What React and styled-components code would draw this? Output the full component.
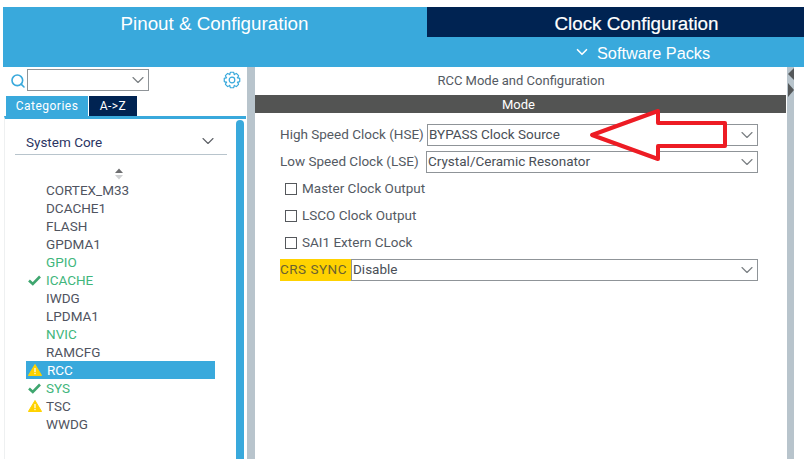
import React from "react";
import styled, { createGlobalStyle } from "styled-components";
import { ChevronDown, Search } from "lucide-react";

const BLUE = "#39a9dc";
const NAVY = "#002352";
const GREY = "#b8c4cc";

const GlobalStyle = createGlobalStyle`
  html, body {
    margin: 0;
    padding: 0;
    background: #fff;
  }
  * {
    box-sizing: border-box;
  }
`;

const peripherals = [
  { name: "CORTEX_M33" },
  { name: "DCACHE1" },
  { name: "FLASH" },
  { name: "GPDMA1" },
  { name: "GPIO", state: "ok" },
  { name: "ICACHE", state: "ok", icon: "check" },
  { name: "IWDG" },
  { name: "LPDMA1" },
  { name: "NVIC", state: "ok" },
  { name: "RAMCFG" },
  { name: "RCC", active: true, icon: "warn" },
  { name: "SYS", state: "ok", icon: "check" },
  { name: "TSC", icon: "warn" },
  { name: "WWDG" },
];

// cog outline, worked out once from the tooth count
const cogPath = (() => {
  const points = [];
  for (let i = 0; i < 8; i++) {
    const a = (i * Math.PI) / 4;
    [[-0.42, 5.9], [-0.2, 7.9], [0.2, 7.9], [0.42, 5.9]].forEach(([d, r]) => {
      points.push(`${(9 + r * Math.cos(a + d)).toFixed(2)} ${(9 + r * Math.sin(a + d)).toFixed(2)}`);
    });
  }
  return `M${points.join(" L")} Z`;
})();

function CheckIcon() {
  return (
    <svg width="13" height="11" viewBox="0 0 13 11">
      <path d="M1 5.5 L4.8 9 L12 1.5" fill="none" stroke="#3fa66f" strokeWidth="2.6" />
    </svg>
  );
}

function WarnIcon() {
  return (
    <svg width="14" height="12" viewBox="0 0 14 12">
      <path d="M7 0.5 L13.6 11.5 L0.4 11.5 Z" fill="#ffd200" stroke="#ffd200" strokeLinejoin="round" />
      <rect x="6.4" y="4" width="1.2" height="4.2" fill="#fff" />
      <rect x="6.4" y="9" width="1.2" height="1.2" fill="#fff" />
    </svg>
  );
}

function GearIcon() {
  return (
    <svg width="18" height="18" viewBox="0 0 18 18">
      <path d={cogPath} fill="none" stroke={BLUE} strokeWidth="1.2" strokeLinejoin="round" />
      <circle cx="9" cy="9" r="2.8" fill="none" stroke={BLUE} strokeWidth="1.2" />
    </svg>
  );
}

function ScrollArrows() {
  return (
    <svg width="10" height="12" viewBox="0 0 10 12">
      <path d="M5 0.5 L9 5 L1 5 Z" fill="#6d6e70" />
      <path d="M1 7 L9 7 L5 11.5 Z" fill="#cfd1d3" />
    </svg>
  );
}

function Select({ value, inset }) {
  return (
    <SelectBox $inset={inset}>
      <span>{value}</span>
      <ChevronDown size={20} strokeWidth={1.4} color="#7b8084" />
    </SelectBox>
  );
}

export default function App() {
  return (
    <Page>
      <GlobalStyle />
      <Header>
        <MainTab>Pinout &amp; Configuration</MainTab>
        <MainTab $dark>Clock Configuration</MainTab>
        <PacksBar>
          <PacksLabel>
            <ChevronDown size={18} strokeWidth={2.2} color="#fff" />
            <span>Software Packs</span>
          </PacksLabel>
        </PacksBar>
      </Header>
      <Main>
        <Sidebar>
          <SearchRow>
            <Search size={16} strokeWidth={2.4} color={BLUE} />
            <SearchBox>
              <ChevronDown size={20} strokeWidth={1.4} color="#7b8084" />
            </SearchBox>
            <GearSlot>
              <GearIcon />
            </GearSlot>
          </SearchRow>
          <Tabs>
            <SideTab $active $width={82}>Categories</SideTab>
            <SideTab $width={48}>A-&gt;Z</SideTab>
          </Tabs>
          <SideBody>
            <Tree>
              <Category>
                <span>System Core</span>
                <ChevronDown size={20} strokeWidth={1.3} color="#5d6066" />
              </Category>
              <ArrowSlot>
                <ScrollArrows />
              </ArrowSlot>
              <List>
                {peripherals.map((item) => (
                  <Item key={item.name} $active={item.active} $ok={item.state === "ok"}>
                    <IconSlot $wide={item.active}>
                      {item.icon === "check" && <CheckIcon />}
                      {item.icon === "warn" && <WarnIcon />}
                    </IconSlot>
                    {item.name}
                  </Item>
                ))}
              </List>
            </Tree>
            <Thumb />
          </SideBody>
        </Sidebar>
        <Splitter />
        <Content>
          <Title>RCC Mode and Configuration</Title>
          <ModeBar>Mode</ModeBar>
          <Form>
            <Row>
              <Label $width={147}>High Speed Clock (HSE)</Label>
              <Select value="BYPASS Clock Source" inset={1} />
            </Row>
            <Row>
              <Label $width={146}>Low Speed Clock (LSE)</Label>
              <Select value="Crystal/Ceramic Resonator" />
            </Row>
            {["Master Clock Output", "LSCO Clock Output", "SAI1 Extern CLock"].map((text) => (
              <CheckRow key={text}>
                <CheckBox />
                <span>{text}</span>
              </CheckRow>
            ))}
            <Row>
              <Highlight>CRS SYNC</Highlight>
              <Select value="Disable" />
            </Row>
          </Form>
        </Content>
        <SideRail>
          <RailArrow $size={6} />
          <RailArrow $size={7} $right />
        </SideRail>
      </Main>
      <Callout width="804" height="459" viewBox="0 0 804 459">
        <path
          d="M592 135 L658 111 L658 123 L725 123 L725 146 L658 146 L658 159 Z"
          fill="#fff"
          stroke="#ed1c24"
          strokeWidth="4"
          strokeLinejoin="round"
        />
      </Callout>
    </Page>
  );
}

const Page = styled.div`
  position: relative;
  width: 804px;
  height: 459px;
  overflow: hidden;
  background: #fff;
  padding: 7px 0 0 3px;
  font-family: Roboto, "Liberation Sans", Arial, sans-serif;
  font-size: 13.5px;
  color: #545a63;
`;

const Header = styled.header`
  display: grid;
  grid-template-columns: 423px 1fr;
  grid-template-rows: 30px 30px;
  column-gap: 1px;
  background: ${BLUE};
`;

const MainTab = styled.div`
  display: flex;
  align-items: center;
  justify-content: center;
  font-family: "Liberation Sans", Arial, sans-serif;
  font-size: 18.8px;
  padding-top: 3px;
  color: #fff;
  background: ${(props) => (props.$dark ? NAVY : BLUE)};
  padding-left: ${(props) => (props.$dark ? "42px" : "0")};
  -webkit-text-stroke: ${(props) => (props.$dark ? "0.2px #fff" : "0")};
`;

const PacksBar = styled.div`
  grid-column: 2;
  display: flex;
  align-items: center;
  padding-left: 146px;
  padding-top: 3px;
`;

const PacksLabel = styled.div`
  display: flex;
  align-items: center;
  gap: 6px;
  font-family: "Liberation Sans", Arial, sans-serif;
  font-size: 16.3px;
  color: #fff;
  svg {
    margin-top: -4px;
  }
`;

const Main = styled.main`
  display: flex;
  height: 392px;
`;

const Sidebar = styled.aside`
  width: 244px;
  display: flex;
  flex-direction: column;
`;

const SearchRow = styled.div`
  height: 29px;
  display: flex;
  align-items: flex-start;
  padding: 2px 0 0 7px;
  svg {
    flex: none;
  }
  > svg:first-child {
    margin-top: 4px;
    margin-right: 1px;
  }
`;

const SearchBox = styled.div`
  width: 122px;
  height: 22px;
  border: 1px solid #8f9498;
  display: flex;
  align-items: center;
  justify-content: flex-end;
`;

const GearSlot = styled.div`
  margin: 2px 0 0 auto;
  padding-right: 6px;
`;

const Tabs = styled.div`
  height: 20px;
  display: flex;
  gap: 1px;
  padding-left: 3px;
`;

const SideTab = styled.div`
  width: ${(props) => props.$width}px;
  height: 20px;
  display: flex;
  align-items: center;
  justify-content: center;
  font-size: 12px;
  letter-spacing: 0.5px;
  color: #fff;
  background: ${(props) => (props.$active ? BLUE : NAVY)};
`;

const SideBody = styled.div`
  flex: 1;
  display: flex;
  min-height: 0;
  margin: 0 1px;
  padding: 1px 1px 0 0;
  border-top: 3px solid ${BLUE};
  border-left: 1px solid #eef0f1;
`;

const Tree = styled.div`
  width: 231px;
`;

const Category = styled.div`
  height: 35px;
  margin: 0 9px 0 10px;
  padding: 11px 9px 0 11px;
  display: flex;
  align-items: flex-start;
  justify-content: space-between;
  line-height: 22px;
  color: #2b3563;
  border-bottom: 1px solid ${GREY};
`;

const ArrowSlot = styled.div`
  height: 26px;
  padding: 12px 0 0 109px;
`;

const List = styled.ul`
  list-style: none;
  margin: 0;
  padding: 0 0 0 21px;
`;

const Item = styled.li`
  width: 189px;
  height: 18px;
  display: flex;
  align-items: center;
  color: ${(props) => (props.$active ? "#fff" : props.$ok ? "#3fb67c" : "#50545f")};
  background: ${(props) => (props.$active ? BLUE : "transparent")};
`;

const IconSlot = styled.span`
  width: ${(props) => (props.$wide ? 21 : 20)}px;
  flex: none;
  display: flex;
  padding-left: 2px;
`;

const Thumb = styled.div`
  width: 8px;
  background: ${BLUE};
  border-radius: 4px 4px 0 0;
`;

const Splitter = styled.div`
  width: 8px;
  background: ${GREY};
`;

const Content = styled.section`
  width: 532px;
  display: flex;
  flex-direction: column;
`;

const Title = styled.div`
  height: 28px;
  padding-bottom: 2px;
  display: flex;
  align-items: center;
  justify-content: center;
  font-size: 13px;
`;

const ModeBar = styled.div`
  height: 18px;
  margin-right: 1px;
  padding-right: 4px;
  display: flex;
  align-items: center;
  justify-content: center;
  font-size: 13px;
  color: #fff;
  background: #535453;
`;

const Form = styled.div`
  padding: 10px 29px 0 25px;
  display: flex;
  flex-direction: column;
  gap: 4px;
`;

const Row = styled.div`
  height: 23px;
  display: flex;
  align-items: center;
`;

const Label = styled.label`
  width: ${(props) => props.$width}px;
  flex: none;
  padding-bottom: 2px;
  white-space: nowrap;
`;

const SelectBox = styled.div`
  flex: 1;
  height: 22px;
  border: 1px solid #8f9498;
  display: flex;
  align-items: center;
  justify-content: space-between;
  padding-left: ${(props) => props.$inset || 1}px;
  color: #4a4f57;
  background: #fff;
  span {
    padding-bottom: 2px;
  }
`;

const CheckRow = styled.div`
  height: 23px;
  display: flex;
  align-items: center;
  padding-left: 5px;
  gap: 5px;
  span:last-child {
    padding-bottom: 2px;
  }
`;

const CheckBox = styled.span`
  width: 12px;
  height: 12px;
  border: 1px solid #55585c;
`;

const Highlight = styled.span`
  width: 71px;
  flex: none;
  height: 22px;
  padding-bottom: 2px;
  display: flex;
  align-items: center;
  white-space: nowrap;
  letter-spacing: 0.5px;
  background: #ffd200;
  color: #6c6230;
`;

const SideRail = styled.div`
  width: 7px;
  background: ${GREY};
  display: flex;
  flex-direction: column;
  align-items: center;
  padding-top: 1px;
  gap: 3px;
`;

const RailArrow = styled.span`
  width: 0;
  height: 0;
  border-top: ${(props) => props.$size}px solid transparent;
  border-bottom: ${(props) => props.$size}px solid transparent;
  ${(props) =>
    props.$right
      ? `border-left: 6px solid #55585a;`
      : `border-right: 6px solid #55585a;`}
`;

const Callout = styled.svg`
  position: absolute;
  left: 0;
  top: 0;
  pointer-events: none;
`;
